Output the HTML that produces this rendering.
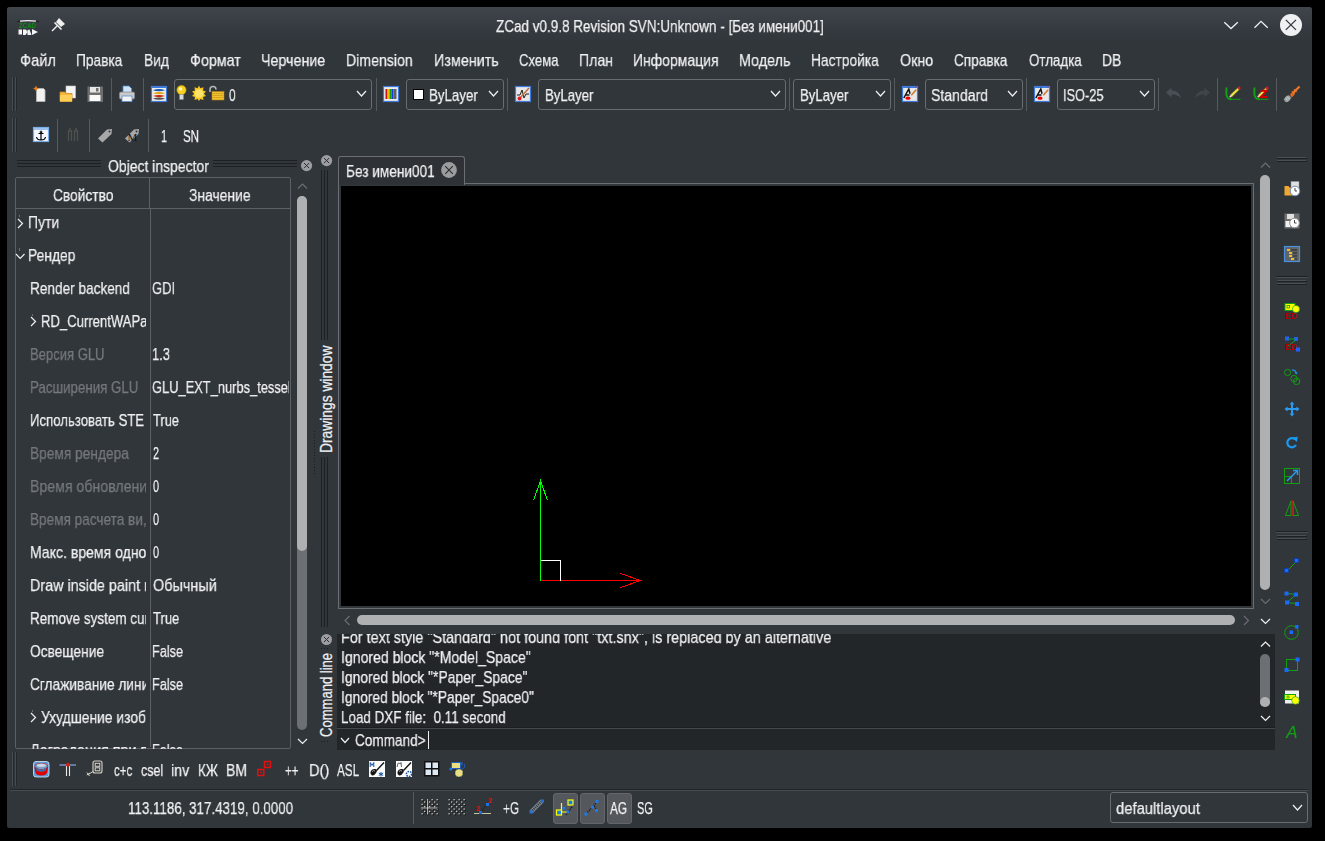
<!DOCTYPE html><html><head><meta charset="utf-8"><style>
html,body{margin:0;padding:0;width:1325px;height:841px;overflow:hidden;background:#000}
body>div,body>svg,div>div{position:absolute}
body{font-family:"Liberation Sans", sans-serif;position:relative}
span{-webkit-text-stroke:0.25px currentColor}
svg{position:absolute;overflow:visible}
</style></head><body>
<div style="left:7px;top:7px;width:1305px;height:821px;background:#31363b;border-radius:3px 3px 2px 2px"></div>
<div style="left:7px;top:7px;width:1305px;height:36px;background:linear-gradient(#40454c,#353a40 60%,#31363b);border-radius:3px 3px 0 0"></div>
<svg style="left:16px;top:18px;" width="24" height="19" viewBox="0 0 24 19"><path d="M1 4 Q3 2.5 5 3" stroke="#1a1a1a" stroke-width="1" fill="none"/><path d="M19 3 Q21 2.5 23 4" stroke="#1a1a1a" stroke-width="1" fill="none"/><path d="M4 3.2 Q12 2.2 20 3.2" stroke="#f0f0f0" stroke-width="1.3" fill="none"/>
<text x="3" y="10.3" textLength="17" lengthAdjust="spacingAndGlyphs" font-family="Liberation Sans" font-weight="bold" font-size="7" fill="#0e8a0e">ZCAD</text>
<path d="M2.5 11.5 h3.5 v5 h-3.5z M7 11.5 h3 l1.5 2.5 l-2 3 h-2.5z M11.5 12 l2 -0.5 l2 5.5 h-4z M16 11 l6 3 l-6 3z" fill="#f4f4f4"/></svg>
<svg style="left:50px;top:16px;" width="17" height="17" viewBox="0 0 17 17"><path d="M9 2 L15 8 L11 11 L6 6 Z" fill="#eff0f1"/><path d="M4.5 6.5 L11.5 13.5" stroke="#eff0f1" stroke-width="1.6"/><path d="M2 15 L7 10" stroke="#eff0f1" stroke-width="1.4"/></svg>
<div style="left:495.80px;top:18px;font-size:17px;line-height:17px;color:#eff0f1;white-space:pre;"><span id="t0" style="display:inline-block;transform:scaleX(0.7939);transform-origin:0 0;will-change:transform">ZCad v0.9.8 Revision SVN:Unknown - [Без имени001]</span></div>
<svg style="left:1222px;top:20px;" width="18" height="11" viewBox="0 0 18 11"><path d="M2.3 2.3 L9 8.5 L15.8 2.3" fill="none" stroke="#eff0f1" stroke-width="1.3"/></svg>
<svg style="left:1252px;top:19px;" width="18" height="11" viewBox="0 0 18 11"><path d="M2.5 8.8 L9 2.4 L15.7 8.8" fill="none" stroke="#eff0f1" stroke-width="1.3"/></svg>
<svg style="left:1279px;top:13px;" width="24" height="24" viewBox="0 0 24 24"><circle cx="12" cy="12" r="11" fill="#eff0f1"/><path d="M6.8 6.9 L17 16.9 M17 6.9 L6.8 16.9" stroke="#31363b" stroke-width="1.3"/></svg>
<div style="left:19.64px;top:52px;font-size:17px;line-height:17px;color:#eff0f1;white-space:pre;"><span id="t1" style="display:inline-block;transform:scaleX(0.8575);transform-origin:0 0;will-change:transform">Файл</span></div>
<div style="left:75.89px;top:52px;font-size:17px;line-height:17px;color:#eff0f1;white-space:pre;"><span id="t2" style="display:inline-block;transform:scaleX(0.8053);transform-origin:0 0;will-change:transform">Правка</span></div>
<div style="left:144.19px;top:52px;font-size:17px;line-height:17px;color:#eff0f1;white-space:pre;"><span id="t3" style="display:inline-block;transform:scaleX(0.8133);transform-origin:0 0;will-change:transform">Вид</span></div>
<div style="left:189.76px;top:52px;font-size:17px;line-height:17px;color:#eff0f1;white-space:pre;"><span id="t4" style="display:inline-block;transform:scaleX(0.8417);transform-origin:0 0;will-change:transform">Формат</span></div>
<div style="left:261.16px;top:52px;font-size:17px;line-height:17px;color:#eff0f1;white-space:pre;"><span id="t5" style="display:inline-block;transform:scaleX(0.8400);transform-origin:0 0;will-change:transform">Черчение</span></div>
<div style="left:346.17px;top:52px;font-size:17px;line-height:17px;color:#eff0f1;white-space:pre;"><span id="t6" style="display:inline-block;transform:scaleX(0.8316);transform-origin:0 0;will-change:transform">Dimension</span></div>
<div style="left:433.75px;top:52px;font-size:17px;line-height:17px;color:#eff0f1;white-space:pre;"><span id="t7" style="display:inline-block;transform:scaleX(0.8453);transform-origin:0 0;will-change:transform">Изменить</span></div>
<div style="left:518.53px;top:52px;font-size:17px;line-height:17px;color:#eff0f1;white-space:pre;"><span id="t8" style="display:inline-block;transform:scaleX(0.7725);transform-origin:0 0;will-change:transform">Схема</span></div>
<div style="left:578.77px;top:52px;font-size:17px;line-height:17px;color:#eff0f1;white-space:pre;"><span id="t9" style="display:inline-block;transform:scaleX(0.8308);transform-origin:0 0;will-change:transform">План</span></div>
<div style="left:632.58px;top:52px;font-size:17px;line-height:17px;color:#eff0f1;white-space:pre;"><span id="t10" style="display:inline-block;transform:scaleX(0.8214);transform-origin:0 0;will-change:transform">Информация</span></div>
<div style="left:738.86px;top:52px;font-size:17px;line-height:17px;color:#eff0f1;white-space:pre;"><span id="t11" style="display:inline-block;transform:scaleX(0.8433);transform-origin:0 0;will-change:transform">Модель</span></div>
<div style="left:810.69px;top:52px;font-size:17px;line-height:17px;color:#eff0f1;white-space:pre;"><span id="t12" style="display:inline-block;transform:scaleX(0.8096);transform-origin:0 0;will-change:transform">Настройка</span></div>
<div style="left:900.40px;top:52px;font-size:17px;line-height:17px;color:#eff0f1;white-space:pre;"><span id="t13" style="display:inline-block;transform:scaleX(0.8410);transform-origin:0 0;will-change:transform">Окно</span></div>
<div style="left:953.70px;top:52px;font-size:17px;line-height:17px;color:#eff0f1;white-space:pre;"><span id="t14" style="display:inline-block;transform:scaleX(0.8000);transform-origin:0 0;will-change:transform">Справка</span></div>
<div style="left:1028.70px;top:52px;font-size:17px;line-height:17px;color:#eff0f1;white-space:pre;"><span id="t15" style="display:inline-block;transform:scaleX(0.7838);transform-origin:0 0;will-change:transform">Отладка</span></div>
<div style="left:1102.18px;top:52px;font-size:17px;line-height:17px;color:#eff0f1;white-space:pre;"><span id="t16" style="display:inline-block;transform:scaleX(0.8182);transform-origin:0 0;will-change:transform">DB</span></div>
<div style="left:12px;top:77px;width:1px;height:34px;background:#474c53;"></div>
<div style="left:13px;top:77px;width:1px;height:34px;background:#25282c;"></div>
<div style="left:15px;top:77px;width:1px;height:34px;background:#474c53;"></div>
<div style="left:16px;top:77px;width:1px;height:34px;background:#25282c;"></div>
<svg style="left:33px;top:85px;" width="14" height="18" viewBox="0 0 14 18"><path d="M3.5 3.5 h7 l1.5 1.5 v11.5 h-8.5z" fill="#f2f2f2" stroke="#b9b9b9" stroke-width="0.8"/><path d="M3 0.5 L3.9 2.6 L6 3.5 L3.9 4.4 L3 6.5 L2.1 4.4 L0 3.5 L2.1 2.6Z" fill="#f07a10"/></svg>
<svg style="left:59px;top:85px;" width="18" height="18" viewBox="0 0 18 18"><rect x="7" y="1" width="9.5" height="12" fill="#f4f4f4" stroke="#c8c8c8" stroke-width="0.6"/><path d="M1 7 h5 l1 1.5 h6 v8 h-12z" fill="#f5b83c" stroke="#d18a1a" stroke-width="0.8"/><rect x="1" y="10" width="12" height="6.5" fill="#fbcf58"/></svg>
<svg style="left:87px;top:86px;" width="16" height="17" viewBox="0 0 16 17"><rect x="0.5" y="0.5" width="15.5" height="15.5" fill="#6e6e6e"/><rect x="3" y="1" width="10" height="5.5" fill="#e6e6e6"/><rect x="9" y="2" width="2.5" height="3.5" fill="#6e6e6e"/><rect x="2.5" y="9" width="11" height="6" fill="#fafafa"/></svg>
<div style="left:111px;top:78px;width:1px;height:33px;background:#555a5f;"></div>
<svg style="left:118px;top:85px;" width="18" height="18" viewBox="0 0 18 18"><path d="M5 1 h6 l2.5 2.5 v4.5 h-8.5z" fill="#cfe4fb" stroke="#4d8ad6" stroke-width="0.8"/><rect x="1.5" y="7" width="15" height="7" rx="1.5" fill="#c9c9c9" stroke="#8a8a8a" stroke-width="0.8"/><rect x="4" y="11" width="10" height="5.5" fill="#f3f3f3" stroke="#5a8fd0" stroke-width="0.8"/></svg>
<div style="left:143px;top:78px;width:1px;height:33px;background:#555a5f;"></div>
<svg style="left:151px;top:86px;" width="16" height="16" viewBox="0 0 16 16"><rect x="0.5" y="0.5" width="15" height="15" fill="#f4eee6" stroke="#3f7bdc" stroke-width="1.2"/><rect x="0" y="0" width="16" height="2" fill="#3f7bdc"/><path d="M1.8 4.2 Q8 2.0 14.2 4.2 Q8 6.4 1.8 4.2Z" fill="#1058b8"/><path d="M1.8 7.2 Q8 5.0 14.2 7.2 Q8 9.4 1.8 7.2Z" fill="#e0a818"/><path d="M1.8 10.1 Q8 7.8999999999999995 14.2 10.1 Q8 12.3 1.8 10.1Z" fill="#c02808"/><path d="M1.8 12.7 Q8 10.5 14.2 12.7 Q8 14.899999999999999 1.8 12.7Z" fill="#505050"/></svg>
<div style="left:174px;top:79px;width:196px;height:29px;border:1px solid #686c70;border-radius:3px;background:#31363b"></div>
<svg style="left:176px;top:85px;" width="12" height="16" viewBox="0 0 12 16"><circle cx="5.5" cy="5" r="4.6" fill="#f5d020" stroke="#c8a000" stroke-width="0.6"/><circle cx="4.5" cy="4" r="1.8" fill="#fff8c0"/><rect x="3.6" y="9.5" width="3.8" height="5" fill="#d8d8d8" stroke="#909090" stroke-width="0.5"/></svg>
<svg style="left:191px;top:85px;" width="16" height="16" viewBox="0 0 16 16"><path d="M8 0.5 L9.4 3.3 L12.5 2.3 L12 5.4 L15 6.6 L12.8 8.8 L15 11 L12 12 L12.5 15 L9.4 14 L8 16 L6.6 14 L3.5 15 L4 12 L1 11 L3.2 8.8 L1 6.6 L4 5.4 L3.5 2.3 L6.6 3.3Z" fill="#f7c51c"/><circle cx="8" cy="8.5" r="4.3" fill="#fde36a"/></svg>
<svg style="left:208px;top:85px;" width="17" height="16" viewBox="0 0 17 16"><path d="M2 7 V4.5 a3 3 0 0 1 6 0" fill="none" stroke="#b8b8b8" stroke-width="1.5"/><rect x="4" y="6.5" width="12" height="8.5" fill="#f2c230" stroke="#b08010" stroke-width="0.6"/><path d="M5 8.5 h10 M5 10.5 h10 M5 12.5 h10" stroke="#c89818" stroke-width="0.7"/></svg>
<div style="left:228.50px;top:87px;font-size:17px;line-height:17px;color:#eff0f1;white-space:pre;"><span id="t17" style="display:inline-block;transform:scaleX(0.7000);transform-origin:0 0;will-change:transform">0</span></div>
<svg style="left:356.0px;top:90.2px;" width="11" height="7" viewBox="0 0 11 7"><path d="M1 1 L5.5 6.0 L10.0 1" fill="none" stroke="#eff0f1" stroke-width="1.2" opacity="1"/></svg>
<div style="left:376px;top:78px;width:1px;height:33px;background:#555a5f;"></div>
<svg style="left:383px;top:86px;" width="16" height="16" viewBox="0 0 16 16"><rect x="0.5" y="0.5" width="15" height="15" fill="#ececec" stroke="#3f7bdc" stroke-width="1.2"/><rect x="2.5" y="3" width="2" height="10" fill="#d01010"/><rect x="4.5" y="3" width="2" height="10" fill="#f0c000"/><rect x="6.5" y="3" width="2" height="10" fill="#10a010"/><rect x="8.5" y="3" width="2" height="10" fill="#1040e0"/><rect x="10.5" y="3" width="3" height="10" fill="#606060"/></svg>
<div style="left:406px;top:79px;width:96px;height:29px;border:1px solid #686c70;border-radius:3px;background:#31363b"></div>
<div style="left:413px;top:89px;width:11px;height:11px;background:#ffffff;box-sizing:border-box;border:1px solid #000"></div>
<div style="left:428.72px;top:87px;font-size:17px;line-height:17px;color:#eff0f1;white-space:pre;"><span id="t18" style="display:inline-block;transform:scaleX(0.7823);transform-origin:0 0;will-change:transform">ByLayer</span></div>
<svg style="left:487.5px;top:90.2px;" width="11" height="7" viewBox="0 0 11 7"><path d="M1 1 L5.5 6.0 L10.0 1" fill="none" stroke="#eff0f1" stroke-width="1.2" opacity="1"/></svg>
<div style="left:507px;top:78px;width:1px;height:33px;background:#555a5f;"></div>
<svg style="left:515px;top:86px;" width="16" height="16" viewBox="0 0 16 16"><rect x="0.5" y="0.5" width="15" height="15" fill="#e8e8e8" stroke="#3f7bdc" stroke-width="1.2"/><path d="M2 9 L5 9 L7 4 L9 12 L11 8 L14 8" fill="none" stroke="#202020" stroke-width="1"/><path d="M14 2 L5 12" stroke="#c07040" stroke-width="1.5"/><circle cx="4.5" cy="12.5" r="2" fill="#e02020"/></svg>
<div style="left:538px;top:79px;width:246px;height:29px;border:1px solid #686c70;border-radius:3px;background:#31363b"></div>
<div style="left:544.92px;top:87px;font-size:17px;line-height:17px;color:#eff0f1;white-space:pre;"><span id="t19" style="display:inline-block;transform:scaleX(0.7758);transform-origin:0 0;will-change:transform">ByLayer</span></div>
<svg style="left:769.5px;top:90.2px;" width="11" height="7" viewBox="0 0 11 7"><path d="M1 1 L5.5 6.0 L10.0 1" fill="none" stroke="#eff0f1" stroke-width="1.2" opacity="1"/></svg>
<div style="left:789px;top:78px;width:1px;height:33px;background:#555a5f;"></div>
<div style="left:793px;top:79px;width:96px;height:29px;border:1px solid #686c70;border-radius:3px;background:#31363b"></div>
<div style="left:799.82px;top:87px;font-size:17px;line-height:17px;color:#eff0f1;white-space:pre;"><span id="t20" style="display:inline-block;transform:scaleX(0.7758);transform-origin:0 0;will-change:transform">ByLayer</span></div>
<svg style="left:874.8px;top:90.2px;" width="11" height="7" viewBox="0 0 11 7"><path d="M1 1 L5.5 6.0 L10.0 1" fill="none" stroke="#eff0f1" stroke-width="1.2" opacity="1"/></svg>
<div style="left:894px;top:78px;width:1px;height:33px;background:#555a5f;"></div>
<svg style="left:902px;top:86px;" width="16" height="16" viewBox="0 0 16 16"><rect x="0.5" y="0.5" width="15" height="15" fill="#e8e8e8" stroke="#3f7bdc" stroke-width="1.2"/><rect x="0" y="0" width="16" height="2" fill="#3f7bdc"/><rect x="13" y="0.3" width="2" height="1.5" fill="#8050b0"/><path d="M1.8 12 L6.8 3 L8 7.8 M4 9 L7.5 9" fill="none" stroke="#101010" stroke-width="1.5"/><path d="M14.2 3.8 L9.3 9.2" stroke="#d07a30" stroke-width="1.6"/><ellipse cx="6" cy="12.2" rx="2.6" ry="1.6" fill="#f00000"/></svg>
<div style="left:925px;top:79px;width:96px;height:29px;border:1px solid #686c70;border-radius:3px;background:#31363b"></div>
<div style="left:931.17px;top:87px;font-size:17px;line-height:17px;color:#eff0f1;white-space:pre;"><span id="t21" style="display:inline-block;transform:scaleX(0.8269);transform-origin:0 0;will-change:transform">Standard</span></div>
<svg style="left:1006.5px;top:90.2px;" width="11" height="7" viewBox="0 0 11 7"><path d="M1 1 L5.5 6.0 L10.0 1" fill="none" stroke="#eff0f1" stroke-width="1.2" opacity="1"/></svg>
<div style="left:1026px;top:78px;width:1px;height:33px;background:#555a5f;"></div>
<svg style="left:1034px;top:86px;" width="16" height="16" viewBox="0 0 16 16"><rect x="0.5" y="0.5" width="15" height="15" fill="#e8e8e8" stroke="#3f7bdc" stroke-width="1.2"/><rect x="0" y="0" width="16" height="2" fill="#3f7bdc"/><rect x="13" y="0.3" width="2" height="1.5" fill="#8050b0"/><path d="M1.8 12 L6.8 3 L8 7.8 M4 9 L7.5 9" fill="none" stroke="#101010" stroke-width="1.5"/><path d="M14.2 3.8 L9.3 9.2" stroke="#d07a30" stroke-width="1.6"/><ellipse cx="6" cy="12.2" rx="2.6" ry="1.6" fill="#f00000"/></svg>
<div style="left:1057px;top:79px;width:96px;height:29px;border:1px solid #686c70;border-radius:3px;background:#31363b"></div>
<div style="left:1063.25px;top:87px;font-size:17px;line-height:17px;color:#eff0f1;white-space:pre;"><span id="t22" style="display:inline-block;transform:scaleX(0.7509);transform-origin:0 0;will-change:transform">ISO-25</span></div>
<svg style="left:1138.5px;top:90.2px;" width="11" height="7" viewBox="0 0 11 7"><path d="M1 1 L5.5 6.0 L10.0 1" fill="none" stroke="#eff0f1" stroke-width="1.2" opacity="1"/></svg>
<div style="left:1158px;top:78px;width:1px;height:33px;background:#555a5f;"></div>
<svg style="left:1165px;top:86px;" width="18" height="16" viewBox="0 0 18 16"><path d="M1 6.5 L6.5 1.5 V4.5 Q15 4.5 16 13 Q13 8 6.5 8.5 V11.5Z" fill="#4a4f55"/></svg>
<svg style="left:1193px;top:86px;" width="18" height="16" viewBox="0 0 18 16"><path d="M17 6.5 L11.5 1.5 V4.5 Q3 4.5 2 13 Q5 8 11.5 8.5 V11.5Z" fill="#40454b"/></svg>
<div style="left:1217px;top:78px;width:1px;height:33px;background:#555a5f;"></div>
<svg style="left:1224px;top:85px;" width="18" height="17" viewBox="0 0 18 17"><path d="M2.4 2.5 V8.5 Q2.4 14 7.5 14.3" fill="none" stroke="#10a010" stroke-width="2"/><path d="M7 14.3 H16.5" stroke="#10a010" stroke-width="1"/><path d="M7.2 10.8 L14.6 3.6" stroke="#c8c020" stroke-width="2.6"/><path d="M7.2 10.8 L14.6 3.6" stroke="#f0e860" stroke-width="1.2"/><path d="M14.2 4 L16 2.2" stroke="#d02020" stroke-width="2.6"/><path d="M5.8 12.2 L7.4 10.6" stroke="#f0d0c0" stroke-width="1.8"/></svg>
<svg style="left:1252px;top:85px;" width="18" height="17" viewBox="0 0 18 17"><path d="M2.4 2.5 V8.5 Q2.4 14 7.5 14.3" fill="none" stroke="#10a010" stroke-width="2"/><path d="M7 14.3 H16.5" stroke="#10a010" stroke-width="1"/><path d="M7.2 10.8 L14.6 3.6" stroke="#c8c020" stroke-width="2.6"/><path d="M7.2 10.8 L14.6 3.6" stroke="#f0e860" stroke-width="1.2"/><path d="M14.2 4 L16 2.2" stroke="#d02020" stroke-width="2.6"/><path d="M5.8 12.2 L7.4 10.6" stroke="#f0d0c0" stroke-width="1.8"/><path d="M8.5 5.8 H14.5 L9 12 H15" fill="none" stroke="#d00000" stroke-width="2"/></svg>
<div style="left:1276px;top:78px;width:1px;height:33px;background:#555a5f;"></div>
<svg style="left:1282px;top:84px;" width="20" height="20" viewBox="0 0 20 20"><path d="M17.5 2.5 L9.5 10.5" stroke="#f07828" stroke-width="2.2"/><path d="M12 5.5 L14.5 8 M10 7.5 L12.5 10" stroke="#f07828" stroke-width="1.5"/><path d="M11.5 9.5 L7.5 13.5" stroke="#e06818" stroke-width="3.2"/><ellipse cx="5.5" cy="14.8" rx="4.3" ry="3.2" transform="rotate(-45 5.5 14.8)" fill="#9aa4a6" stroke="#202020" stroke-width="0.7"/><path d="M3.5 14 L6 16.5 M5 12.5 L7.5 15" stroke="#d8dcdc" stroke-width="0.8"/></svg>
<div style="left:12px;top:118px;width:1px;height:34px;background:#474c53;"></div>
<div style="left:13px;top:118px;width:1px;height:34px;background:#25282c;"></div>
<div style="left:15px;top:118px;width:1px;height:34px;background:#474c53;"></div>
<div style="left:16px;top:118px;width:1px;height:34px;background:#25282c;"></div>
<svg style="left:33px;top:127px;" width="16" height="15" viewBox="0 0 16 15"><rect x="0.5" y="0.5" width="15" height="14" fill="#f4f8ff" stroke="#7aaee8" stroke-width="1.2"/><rect x="1" y="1" width="14" height="2" fill="#9cc4f0"/><path d="M8 4.5 V12.5 M5.5 6.5 h5 M3.5 10 Q4 13 8 13 Q12 13 12.5 10" fill="none" stroke="#000" stroke-width="1.2"/><circle cx="8" cy="5" r="1" fill="none" stroke="#000" stroke-width="0.8"/></svg>
<div style="left:57px;top:119px;width:1px;height:33px;background:#555a5f;"></div>
<svg style="left:67px;top:127px;" width="12" height="15" viewBox="0 0 12 15"><path d="M1.5 14 V4 h3 V14 M7.5 14 V4 h3 V14" fill="none" stroke="#4e524d" stroke-width="1.3"/><path d="M3 1 v3 M9 1 v3" stroke="#4e524d" stroke-width="1.5"/></svg>
<div style="left:89px;top:119px;width:1px;height:33px;background:#555a5f;"></div>
<svg style="left:97px;top:127px;" width="16" height="15" viewBox="0 0 16 15"><path d="M1 11.5 L10 2.5 L15 2 L14.5 7 L5.5 15.5Z" fill="#a8a8a8"/><circle cx="12.5" cy="4.5" r="1" fill="#31363b"/></svg>
<svg style="left:124px;top:127px;" width="17" height="15" viewBox="0 0 17 15"><path d="M1 11.5 L10 2.5 L15 2 L14.5 7 L5.5 15.5Z" fill="#a8a8a8"/><circle cx="12.5" cy="4.5" r="1" fill="#31363b"/><text x="8.5" y="14" font-family="Liberation Serif" font-size="11" fill="#111" text-anchor="middle">M</text></svg>
<div style="left:148px;top:119px;width:1px;height:33px;background:#555a5f;"></div>
<div style="left:161.38px;top:128px;font-size:17px;line-height:17px;color:#eff0f1;white-space:pre;"><span id="t23" style="display:inline-block;transform:scaleX(0.6250);transform-origin:0 0;will-change:transform">1</span></div>
<div style="left:182.92px;top:128px;font-size:17px;line-height:17px;color:#eff0f1;white-space:pre;"><span id="t24" style="display:inline-block;transform:scaleX(0.6773);transform-origin:0 0;will-change:transform">SN</span></div>
<div style="left:17px;top:160px;width:84px;height:1px;background:#1e2124;"></div>
<div style="left:17px;top:161px;width:84px;height:1px;background:#31363b;"></div>
<div style="left:17px;top:163px;width:84px;height:1px;background:#1e2124;"></div>
<div style="left:17px;top:164px;width:84px;height:1px;background:#31363b;"></div>
<div style="left:17px;top:166px;width:84px;height:1px;background:#1e2124;"></div>
<div style="left:17px;top:167px;width:84px;height:1px;background:#31363b;"></div>
<div style="left:213px;top:160px;width:84px;height:1px;background:#1e2124;"></div>
<div style="left:213px;top:161px;width:84px;height:1px;background:#31363b;"></div>
<div style="left:213px;top:163px;width:84px;height:1px;background:#1e2124;"></div>
<div style="left:213px;top:164px;width:84px;height:1px;background:#31363b;"></div>
<div style="left:213px;top:166px;width:84px;height:1px;background:#1e2124;"></div>
<div style="left:213px;top:167px;width:84px;height:1px;background:#31363b;"></div>
<div style="left:107.70px;top:158px;font-size:17px;line-height:17px;color:#eff0f1;white-space:pre;"><span id="t25" style="display:inline-block;transform:scaleX(0.8211);transform-origin:0 0;will-change:transform">Object inspector</span></div>
<svg style="left:299.7px;top:158.8px;" width="13.2" height="13.2" viewBox="0 0 13.2 13.2"><circle cx="6.6" cy="6.6" r="5.6" fill="#9c9ea1"/><path d="M3.9999999999999996 3.9999999999999996 L9.2 9.2 M9.2 3.9999999999999996 L3.9999999999999996 9.2" stroke="#2a2e32" stroke-width="1"/></svg>
<div style="left:15px;top:177px;width:274px;height:570px;border:1px solid #5d6166;border-radius:2px"></div>
<div style="left:16px;top:208px;width:274px;height:1px;background:#5d6166;"></div>
<div style="left:149px;top:178px;width:1px;height:30px;background:#5d6166;"></div>
<div style="left:150px;top:209px;width:1px;height:538px;background:#5d6166;"></div>
<div style="left:53.09px;top:187px;font-size:17px;line-height:17px;color:#eff0f1;white-space:pre;"><span id="t26" style="display:inline-block;transform:scaleX(0.8096);transform-origin:0 0;will-change:transform">Свойство</span></div>
<div style="left:189.00px;top:187px;font-size:17px;line-height:17px;color:#eff0f1;white-space:pre;"><span id="t27" style="display:inline-block;transform:scaleX(0.8160);transform-origin:0 0;will-change:transform">Значение</span></div>
<svg style="left:16.8px;top:217.5px;" width="6.5" height="11" viewBox="0 0 6.5 11"><path d="M1 1 L5.5 5.5 L1 10.0" fill="none" stroke="#eff0f1" stroke-width="1.2" opacity="1"/></svg>
<div style="left:19px;top:215px;width:1px;height:2px;background:#6a6e72;"></div>
<div style="left:25.5px;top:212px;width:120.5px;height:23px;overflow:hidden"><div style="left:2.18px;top:2px;font-size:17px;line-height:17px;color:#eff0f1;white-space:pre;"><span id="t28" style="display:inline-block;transform:scaleX(0.8222);transform-origin:0 0;will-change:transform">Пути</span></div></div>
<svg style="left:14.9px;top:252.6px;" width="10.5" height="6.5" viewBox="0 0 10.5 6.5"><path d="M1 1 L5.2 5.5 L9.5 1" fill="none" stroke="#eff0f1" stroke-width="1.2" opacity="1"/></svg>
<div style="left:19px;top:248px;width:1px;height:3px;background:#6a6e72;"></div>
<div style="left:25.6px;top:245px;width:120.4px;height:23px;overflow:hidden"><div style="left:2.19px;top:2px;font-size:17px;line-height:17px;color:#eff0f1;white-space:pre;"><span id="t29" style="display:inline-block;transform:scaleX(0.8140);transform-origin:0 0;will-change:transform">Рендер</span></div></div>
<div style="left:27.8px;top:278px;width:118.2px;height:23px;overflow:hidden"><div style="left:2.20px;top:2px;font-size:17px;line-height:17px;color:#eff0f1;white-space:pre;"><span id="t30" style="display:inline-block;transform:scaleX(0.8008);transform-origin:0 0;will-change:transform">Render backend</span></div></div>
<div style="left:149.7px;top:278px;width:139.3px;height:23px;overflow:hidden"><div style="left:2.24px;top:2px;font-size:17px;line-height:17px;color:#eff0f1;white-space:pre;"><span id="t31" style="display:inline-block;transform:scaleX(0.7643);transform-origin:0 0;will-change:transform">GDI</span></div></div>
<svg style="left:29.5px;top:316.3px;" width="6.5" height="11" viewBox="0 0 6.5 11"><path d="M1 1 L5.5 5.5 L1 10.0" fill="none" stroke="#eff0f1" stroke-width="1.2" opacity="1"/></svg>
<div style="left:32px;top:314px;width:1px;height:2px;background:#6a6e72;"></div>
<div style="left:38.7px;top:311px;width:107.3px;height:23px;overflow:hidden"><div style="left:2.23px;top:2px;font-size:17px;line-height:17px;color:#eff0f1;white-space:pre;"><span id="t32" style="display:inline-block;transform:scaleX(0.7703);transform-origin:0 0;will-change:transform">RD_CurrentWAPa</span></div></div>
<div style="left:27.8px;top:344px;width:118.2px;height:23px;overflow:hidden"><div style="left:2.23px;top:2px;font-size:17px;line-height:17px;color:#75787c;white-space:pre;"><span id="t33" style="display:inline-block;transform:scaleX(0.7674);transform-origin:0 0;will-change:transform">Версия GLU</span></div></div>
<div style="left:149.7px;top:344px;width:139.3px;height:23px;overflow:hidden"><div style="left:2.25px;top:2px;font-size:17px;line-height:17px;color:#eff0f1;white-space:pre;"><span id="t34" style="display:inline-block;transform:scaleX(0.7545);transform-origin:0 0;will-change:transform">1.3</span></div></div>
<div style="left:27.8px;top:377px;width:118.2px;height:23px;overflow:hidden"><div style="left:2.22px;top:2px;font-size:17px;line-height:17px;color:#75787c;white-space:pre;"><span id="t35" style="display:inline-block;transform:scaleX(0.7825);transform-origin:0 0;will-change:transform">Расширения GLU</span></div></div>
<div style="left:149.7px;top:377px;width:139.3px;height:23px;overflow:hidden"><div style="left:2.24px;top:2px;font-size:17px;line-height:17px;color:#eff0f1;white-space:pre;"><span id="t36" style="display:inline-block;transform:scaleX(0.7571);transform-origin:0 0;will-change:transform">GLU_EXT_nurbs_tessel</span></div></div>
<div style="left:27.8px;top:410px;width:118.2px;height:23px;overflow:hidden"><div style="left:2.22px;top:2px;font-size:17px;line-height:17px;color:#eff0f1;white-space:pre;"><span id="t37" style="display:inline-block;transform:scaleX(0.7753);transform-origin:0 0;will-change:transform">Использовать STE</span></div></div>
<div style="left:149.7px;top:410px;width:139.3px;height:23px;overflow:hidden"><div style="left:3.00px;top:2px;font-size:17px;line-height:17px;color:#eff0f1;white-space:pre;"><span id="t38" style="display:inline-block;transform:scaleX(0.7588);transform-origin:0 0;will-change:transform">True</span></div></div>
<div style="left:27.8px;top:443px;width:118.2px;height:23px;overflow:hidden"><div style="left:2.19px;top:2px;font-size:17px;line-height:17px;color:#75787c;white-space:pre;"><span id="t39" style="display:inline-block;transform:scaleX(0.8074);transform-origin:0 0;will-change:transform">Время рендера</span></div></div>
<div style="left:149.7px;top:443px;width:139.3px;height:23px;overflow:hidden"><div style="left:3.00px;top:2px;font-size:17px;line-height:17px;color:#eff0f1;white-space:pre;"><span id="t40" style="display:inline-block;transform:scaleX(0.6333);transform-origin:0 0;will-change:transform">2</span></div></div>
<div style="left:27.8px;top:476px;width:118.2px;height:23px;overflow:hidden"><div style="left:2.17px;top:2px;font-size:17px;line-height:17px;color:#75787c;white-space:pre;"><span id="t41" style="display:inline-block;transform:scaleX(0.8324);transform-origin:0 0;will-change:transform">Время обновлени</span></div></div>
<div style="left:149.7px;top:476px;width:139.3px;height:23px;overflow:hidden"><div style="left:3.00px;top:2px;font-size:17px;line-height:17px;color:#eff0f1;white-space:pre;"><span id="t42" style="display:inline-block;transform:scaleX(0.6333);transform-origin:0 0;will-change:transform">0</span></div></div>
<div style="left:27.8px;top:509px;width:118.2px;height:23px;overflow:hidden"><div style="left:2.20px;top:2px;font-size:17px;line-height:17px;color:#75787c;white-space:pre;"><span id="t43" style="display:inline-block;transform:scaleX(0.8000);transform-origin:0 0;will-change:transform">Время расчета ви,</span></div></div>
<div style="left:149.7px;top:509px;width:139.3px;height:23px;overflow:hidden"><div style="left:3.00px;top:2px;font-size:17px;line-height:17px;color:#eff0f1;white-space:pre;"><span id="t44" style="display:inline-block;transform:scaleX(0.6333);transform-origin:0 0;will-change:transform">0</span></div></div>
<div style="left:27.8px;top:542px;width:118.2px;height:23px;overflow:hidden"><div style="left:2.17px;top:2px;font-size:17px;line-height:17px;color:#eff0f1;white-space:pre;"><span id="t45" style="display:inline-block;transform:scaleX(0.8266);transform-origin:0 0;will-change:transform">Макс. время одно</span></div></div>
<div style="left:149.7px;top:542px;width:139.3px;height:23px;overflow:hidden"><div style="left:3.00px;top:2px;font-size:17px;line-height:17px;color:#eff0f1;white-space:pre;"><span id="t46" style="display:inline-block;transform:scaleX(0.6333);transform-origin:0 0;will-change:transform">0</span></div></div>
<div style="left:27.4px;top:575px;width:118.6px;height:23px;overflow:hidden"><div style="left:2.16px;top:2px;font-size:17px;line-height:17px;color:#eff0f1;white-space:pre;"><span id="t47" style="display:inline-block;transform:scaleX(0.8436);transform-origin:0 0;will-change:transform">Draw inside paint r</span></div></div>
<div style="left:149.7px;top:575px;width:139.3px;height:23px;overflow:hidden"><div style="left:3.00px;top:2px;font-size:17px;line-height:17px;color:#eff0f1;white-space:pre;"><span id="t48" style="display:inline-block;transform:scaleX(0.8480);transform-origin:0 0;will-change:transform">Обычный</span></div></div>
<div style="left:27.4px;top:608px;width:118.6px;height:23px;overflow:hidden"><div style="left:2.21px;top:2px;font-size:17px;line-height:17px;color:#eff0f1;white-space:pre;"><span id="t49" style="display:inline-block;transform:scaleX(0.7926);transform-origin:0 0;will-change:transform">Remove system cur</span></div></div>
<div style="left:149.7px;top:608px;width:139.3px;height:23px;overflow:hidden"><div style="left:3.00px;top:2px;font-size:17px;line-height:17px;color:#eff0f1;white-space:pre;"><span id="t50" style="display:inline-block;transform:scaleX(0.7676);transform-origin:0 0;will-change:transform">True</span></div></div>
<div style="left:27.4px;top:641px;width:118.6px;height:23px;overflow:hidden"><div style="left:3.00px;top:2px;font-size:17px;line-height:17px;color:#eff0f1;white-space:pre;"><span id="t51" style="display:inline-block;transform:scaleX(0.8077);transform-origin:0 0;will-change:transform">Освещение</span></div></div>
<div style="left:149.7px;top:641px;width:139.3px;height:23px;overflow:hidden"><div style="left:2.25px;top:2px;font-size:17px;line-height:17px;color:#eff0f1;white-space:pre;"><span id="t52" style="display:inline-block;transform:scaleX(0.7500);transform-origin:0 0;will-change:transform">False</span></div></div>
<div style="left:27.4px;top:674px;width:118.6px;height:23px;overflow:hidden"><div style="left:2.19px;top:2px;font-size:17px;line-height:17px;color:#eff0f1;white-space:pre;"><span id="t53" style="display:inline-block;transform:scaleX(0.8055);transform-origin:0 0;will-change:transform">Сглаживание лини</span></div></div>
<div style="left:149.7px;top:674px;width:139.3px;height:23px;overflow:hidden"><div style="left:2.25px;top:2px;font-size:17px;line-height:17px;color:#eff0f1;white-space:pre;"><span id="t54" style="display:inline-block;transform:scaleX(0.7500);transform-origin:0 0;will-change:transform">False</span></div></div>
<svg style="left:29.5px;top:712.3px;" width="6.5" height="11" viewBox="0 0 6.5 11"><path d="M1 1 L5.5 5.5 L1 10.0" fill="none" stroke="#eff0f1" stroke-width="1.2" opacity="1"/></svg>
<div style="left:32px;top:710px;width:1px;height:2px;background:#6a6e72;"></div>
<div style="left:38.3px;top:707px;width:107.7px;height:23px;overflow:hidden"><div style="left:3.00px;top:2px;font-size:17px;line-height:17px;color:#eff0f1;white-space:pre;"><span id="t55" style="display:inline-block;transform:scaleX(0.8148);transform-origin:0 0;will-change:transform">Ухудшение изоб</span></div></div>
<div style="left:27.4px;top:740px;width:118.6px;height:23px;overflow:hidden"><div style="left:3.00px;top:2px;font-size:17px;line-height:17px;color:#eff0f1;white-space:pre;"><span id="t56" style="display:inline-block;transform:scaleX(0.8400);transform-origin:0 0;will-change:transform">Деградация при п</span></div></div>
<div style="left:149.7px;top:740px;width:139.3px;height:23px;overflow:hidden"><div style="left:2.25px;top:2px;font-size:17px;line-height:17px;color:#eff0f1;white-space:pre;"><span id="t57" style="display:inline-block;transform:scaleX(0.7500);transform-origin:0 0;will-change:transform">False</span></div></div>
<div style="left:15px;top:749px;width:276px;height:11px;background:#31363b;"></div>
<svg style="left:296.5px;top:183.2px;" width="11" height="6.5" viewBox="0 0 11 6.5"><path d="M1.0 5.5 L5.5 1 L10.0 5.5" fill="none" stroke="#6a6e72" stroke-width="1.2" opacity="1"/></svg>
<div style="left:297px;top:196px;width:10px;height:534px;background:#6c6f73;border-radius:5px"></div>
<div style="left:297px;top:196px;width:10px;height:355px;background:#afb0b2;border-radius:5px"></div>
<svg style="left:296.5px;top:737.5px;" width="11" height="6.5" viewBox="0 0 11 6.5"><path d="M1 1 L5.5 5.5 L10.0 1" fill="none" stroke="#eff0f1" stroke-width="1.2" opacity="1"/></svg>
<svg style="left:319.79999999999995px;top:154.0px;" width="13.2" height="13.2" viewBox="0 0 13.2 13.2"><circle cx="6.6" cy="6.6" r="5.6" fill="#9c9ea1"/><path d="M3.9999999999999996 3.9999999999999996 L9.2 9.2 M9.2 3.9999999999999996 L3.9999999999999996 9.2" stroke="#2a2e32" stroke-width="1"/></svg>
<div style="left:321px;top:170px;width:1px;height:170px;background:#1e2124;"></div>
<div style="left:322px;top:170px;width:1px;height:170px;background:#31363b;"></div>
<div style="left:324px;top:170px;width:1px;height:170px;background:#1e2124;"></div>
<div style="left:325px;top:170px;width:1px;height:170px;background:#31363b;"></div>
<div style="left:327px;top:170px;width:1px;height:170px;background:#1e2124;"></div>
<div style="left:328px;top:170px;width:1px;height:170px;background:#31363b;"></div>
<div style="left:321px;top:457px;width:1px;height:170px;background:#1e2124;"></div>
<div style="left:322px;top:457px;width:1px;height:170px;background:#31363b;"></div>
<div style="left:324px;top:457px;width:1px;height:170px;background:#1e2124;"></div>
<div style="left:325px;top:457px;width:1px;height:170px;background:#31363b;"></div>
<div style="left:327px;top:457px;width:1px;height:170px;background:#1e2124;"></div>
<div style="left:328px;top:457px;width:1px;height:170px;background:#31363b;"></div>
<div style="left:319px;top:453.06px;font-size:16px;line-height:16px;color:#eff0f1;white-space:pre;transform:rotate(-90deg) scaleX(0.8629);transform-origin:0 0"><span id="t58">Drawings window</span></div>
<div style="left:314px;top:431px;width:1px;height:1px;background:#1a1d20;"></div>
<div style="left:314px;top:434px;width:1px;height:1px;background:#1a1d20;"></div>
<div style="left:314px;top:437px;width:1px;height:1px;background:#1a1d20;"></div>
<div style="left:314px;top:440px;width:1px;height:1px;background:#1a1d20;"></div>
<div style="left:314px;top:443px;width:1px;height:1px;background:#1a1d20;"></div>
<div style="left:314px;top:446px;width:1px;height:1px;background:#1a1d20;"></div>
<div style="left:314px;top:449px;width:1px;height:1px;background:#1a1d20;"></div>
<div style="left:314px;top:452px;width:1px;height:1px;background:#1a1d20;"></div>
<div style="left:314px;top:455px;width:1px;height:1px;background:#1a1d20;"></div>
<div style="left:314px;top:458px;width:1px;height:1px;background:#1a1d20;"></div>
<div style="left:314px;top:461px;width:1px;height:1px;background:#1a1d20;"></div>
<div style="left:314px;top:464px;width:1px;height:1px;background:#1a1d20;"></div>
<div style="left:314px;top:467px;width:1px;height:1px;background:#1a1d20;"></div>
<div style="left:314px;top:470px;width:1px;height:1px;background:#1a1d20;"></div>
<div style="left:314px;top:473px;width:1px;height:1px;background:#1a1d20;"></div>
<div style="left:338px;top:156px;width:125px;height:28px;border:1px solid #6b6f73;border-bottom:none;border-radius:3px 3px 0 0;background:#2e3236"></div>
<div style="left:346.40px;top:163px;font-size:17px;line-height:17px;color:#eff0f1;white-space:pre;"><span id="t59" style="display:inline-block;transform:scaleX(0.8018);transform-origin:0 0;will-change:transform">Без имени001</span></div>
<svg style="left:440px;top:161px;" width="18" height="18" viewBox="0 0 18 18"><circle cx="9" cy="9" r="7.9" fill="#9a9c9e"/><path d="M5.2 5.2 L12.8 12.8 M12.8 5.2 L5.2 12.8" stroke="#2a2e32" stroke-width="1.1"/></svg>
<div style="left:464px;top:183px;width:790px;height:1px;background:#6b6f73;"></div>
<div style="left:338px;top:184px;width:1px;height:425px;background:#6b6f73;"></div>
<div style="left:1253px;top:183px;width:1px;height:426px;background:#6b6f73;"></div>
<div style="left:338px;top:608px;width:916px;height:1px;background:#6b6f73;"></div>
<div style="left:341px;top:186px;width:910px;height:420px;background:#000000;"></div>
<svg style="left:530px;top:478px;shape-rendering:crispEdges" width="115" height="112" viewBox="0 0 115 112"><path d="M10.5 2.5 V102.5" stroke="#00ff00" stroke-width="1"/>
<path d="M3.5 22.5 L10.5 2.5 L17.5 22.5" fill="none" stroke="#00ff00" stroke-width="1"/>
<path d="M10.5 102.5 H110.5" stroke="#ff0000" stroke-width="1"/>
<path d="M90.5 95.5 L110.5 102.5 L90.5 109.5" fill="none" stroke="#ff0000" stroke-width="1"/>
<path d="M10.5 82.5 H30.5 V102.5" fill="none" stroke="#ffffff" stroke-width="1"/></svg>
<svg style="left:1259.5px;top:161.8px;" width="11" height="6.5" viewBox="0 0 11 6.5"><path d="M1.0 5.5 L5.5 1 L10.0 5.5" fill="none" stroke="#6a6e72" stroke-width="1.2" opacity="1"/></svg>
<div style="left:1260px;top:175px;width:10px;height:415px;background:#afb0b2;border-radius:5px"></div>
<svg style="left:1259.5px;top:597.5px;" width="11" height="6.5" viewBox="0 0 11 6.5"><path d="M1 1 L5.5 5.5 L10.0 1" fill="none" stroke="#6a6e72" stroke-width="1.2" opacity="1"/></svg>
<svg style="left:343.8px;top:614.5px;" width="6.5" height="11" viewBox="0 0 6.5 11"><path d="M5.5 1 L1 5.5 L5.5 10.0" fill="none" stroke="#6a6e72" stroke-width="1.2" opacity="1"/></svg>
<div style="left:357px;top:615px;width:878px;height:10px;background:#afb0b2;border-radius:5px"></div>
<svg style="left:1242.8px;top:614.5px;" width="6.5" height="11" viewBox="0 0 6.5 11"><path d="M1 1 L5.5 5.5 L1 10.0" fill="none" stroke="#6a6e72" stroke-width="1.2" opacity="1"/></svg>
<svg style="left:1259.5px;top:617.5px;" width="11" height="6.5" viewBox="0 0 11 6.5"><path d="M1 1 L5.5 5.5 L10.0 1" fill="none" stroke="#eff0f1" stroke-width="1.2" opacity="1"/></svg>
<div style="left:321px;top:457px;width:1px;height:170px;background:#1e2124;"></div>
<div style="left:322px;top:457px;width:1px;height:170px;background:#31363b;"></div>
<div style="left:324px;top:457px;width:1px;height:170px;background:#1e2124;"></div>
<div style="left:325px;top:457px;width:1px;height:170px;background:#31363b;"></div>
<div style="left:327px;top:457px;width:1px;height:170px;background:#1e2124;"></div>
<div style="left:328px;top:457px;width:1px;height:170px;background:#31363b;"></div>
<svg style="left:320.0px;top:633.0px;" width="13.0" height="13.0" viewBox="0 0 13.0 13.0"><circle cx="6.5" cy="6.5" r="5.5" fill="#9c9ea1"/><path d="M3.9 3.9 L9.1 9.1 M9.1 3.9 L3.9 9.1" stroke="#2a2e32" stroke-width="1"/></svg>
<div style="left:319px;top:737.00px;font-size:16px;line-height:16px;color:#eff0f1;white-space:pre;transform:rotate(-90deg) scaleX(0.8155);transform-origin:0 0"><span id="t60">Command line</span></div>
<div style="left:321px;top:648px;width:1px;height:1px;background:#1a1d20;"></div>
<div style="left:321px;top:741px;width:1px;height:1px;background:#1a1d20;"></div>
<div style="left:324px;top:648px;width:1px;height:1px;background:#1a1d20;"></div>
<div style="left:324px;top:741px;width:1px;height:1px;background:#1a1d20;"></div>
<div style="left:327px;top:648px;width:1px;height:1px;background:#1a1d20;"></div>
<div style="left:327px;top:741px;width:1px;height:1px;background:#1a1d20;"></div>
<div style="left:337px;top:634px;width:938px;height:116px;background:#232629;"></div>
<div style="left:340.65px;top:629px;font-size:17px;line-height:17px;color:#eff0f1;white-space:pre;"><span id="t61" style="display:inline-block;transform:scaleX(0.8469);transform-origin:0 0;will-change:transform">For text style &quot;Standard&quot; not found font &quot;txt.shx&quot;, is replaced by an alternative</span></div>
<div style="left:340.67px;top:649px;font-size:17px;line-height:17px;color:#eff0f1;white-space:pre;"><span id="t62" style="display:inline-block;transform:scaleX(0.8268);transform-origin:0 0;will-change:transform">Ignored block &quot;*Model_Space&quot;</span></div>
<div style="left:340.68px;top:669px;font-size:17px;line-height:17px;color:#eff0f1;white-space:pre;"><span id="t63" style="display:inline-block;transform:scaleX(0.8159);transform-origin:0 0;will-change:transform">Ignored block &quot;*Paper_Space&quot;</span></div>
<div style="left:340.69px;top:689px;font-size:17px;line-height:17px;color:#eff0f1;white-space:pre;"><span id="t64" style="display:inline-block;transform:scaleX(0.8105);transform-origin:0 0;will-change:transform">Ignored block &quot;*Paper_Space0&quot;</span></div>
<div style="left:340.71px;top:709px;font-size:17px;line-height:17px;color:#eff0f1;white-space:pre;"><span id="t65" style="display:inline-block;transform:scaleX(0.7899);transform-origin:0 0;will-change:transform">Load DXF file:  0.11 second</span></div>
<div style="left:337px;top:626px;width:938px;height:8px;background:#31363b;"></div>
<div style="left:337px;top:727px;width:938px;height:1px;background:#1c1f22;"></div>
<div style="left:337px;top:728px;width:938px;height:1px;background:#43484f;"></div>
<div style="left:337px;top:729px;width:938px;height:21px;background:#232629;"></div>
<svg style="left:339.8px;top:737.2px;" width="10" height="6.5" viewBox="0 0 10 6.5"><path d="M1 1 L5.0 5.5 L9.0 1" fill="none" stroke="#eff0f1" stroke-width="1.2" opacity="1"/></svg>
<div style="left:355.10px;top:732px;font-size:17px;line-height:17px;color:#eff0f1;white-space:pre;"><span id="t66" style="display:inline-block;transform:scaleX(0.7989);transform-origin:0 0;will-change:transform">Command&gt;</span></div>
<div style="left:428px;top:731px;width:1px;height:18px;background:#eff0f1;"></div>
<div style="left:1255px;top:634px;width:20px;height:93px;background:#232629;"></div>
<svg style="left:1259.5px;top:641.0px;" width="11" height="6.5" viewBox="0 0 11 6.5"><path d="M1.0 5.5 L5.5 1 L10.0 5.5" fill="none" stroke="#eff0f1" stroke-width="1.2" opacity="1"/></svg>
<div style="left:1260px;top:654px;width:10px;height:53px;background:#6c6f73;border-radius:5px"></div>
<div style="left:1260px;top:697px;width:10px;height:10px;background:#afb0b2;border-radius:5px"></div>
<svg style="left:1259.5px;top:714.5px;" width="11" height="6.5" viewBox="0 0 11 6.5"><path d="M1 1 L5.5 5.5 L10.0 1" fill="none" stroke="#eff0f1" stroke-width="1.2" opacity="1"/></svg>
<div style="left:1277px;top:157px;width:29px;height:1px;background:#4a4f56;"></div>
<div style="left:1277px;top:158px;width:30px;height:1px;background:#1e2124;"></div>
<div style="left:1277px;top:160px;width:29px;height:1px;background:#4a4f56;"></div>
<div style="left:1277px;top:161px;width:30px;height:1px;background:#1e2124;"></div>
<svg style="left:1284px;top:181px;" width="16" height="16" viewBox="0 0 16 16"><path d="M0.5 5 h4 l1 1.5 h5 v8 h-10z" fill="#f0a830"/><rect x="7" y="0.5" width="8" height="7" fill="#e0e0e0" stroke="#909090" stroke-width="0.5"/><circle cx="11" cy="10" r="4.8" fill="#fff" stroke="#6a8ab8" stroke-width="1"/><path d="M11 7 V10 H13" stroke="#333" stroke-width="0.9" fill="none"/></svg>
<svg style="left:1284px;top:213px;" width="16" height="16" viewBox="0 0 16 16"><rect x="0.5" y="0.5" width="15" height="15" fill="#707070"/><rect x="3" y="1" width="7" height="5" fill="#e0e0e0"/><rect x="1.5" y="8" width="5" height="6" fill="#f0f0f0"/><circle cx="10.5" cy="10" r="4.8" fill="#fff" stroke="#909090" stroke-width="1"/><path d="M10.5 7 V10 H12.5" stroke="#333" stroke-width="0.9" fill="none"/></svg>
<svg style="left:1284px;top:246px;" width="16" height="16" viewBox="0 0 16 16"><rect x="0.5" y="0.5" width="15" height="15" fill="#606468" stroke="#4a90e0" stroke-width="1.2"/><path d="M3 3 h3 v2 h-3z M5 6 h3 v2 h-3z M5 9 h3 v2 h-3z M7 12 h3 v2h-3z" fill="#f0c020"/><path d="M7 4 h6 M9 7 h4 M9 10 h4 M11 13 h2" stroke="#222" stroke-width="1"/></svg>
<div style="left:1276px;top:276px;width:32px;height:1px;background:#1e2124;"></div>
<div style="left:1276px;top:277px;width:32px;height:1px;background:#4a4f56;"></div>
<div style="left:1277px;top:280px;width:29px;height:1px;background:#4a4f56;"></div>
<div style="left:1277px;top:281px;width:30px;height:1px;background:#1e2124;"></div>
<div style="left:1277px;top:283px;width:29px;height:1px;background:#4a4f56;"></div>
<div style="left:1277px;top:284px;width:30px;height:1px;background:#1e2124;"></div>
<svg style="left:1284px;top:303px;" width="16" height="16" viewBox="0 0 16 16"><rect x="1" y="0.5" width="10" height="7" fill="#ffff00" stroke="#10a010" stroke-width="1"/><rect x="3" y="2.5" width="2.5" height="2.5" fill="none" stroke="#10a010" stroke-width="0.8"/><circle cx="12" cy="6" r="3.6" fill="#ffff00" stroke="#10a010" stroke-width="0.6"/><text x="1" y="16" font-family="Liberation Sans" font-weight="bold" font-size="8.5" fill="#b00000">ED</text></svg>
<svg style="left:1284px;top:336px;" width="16" height="16" viewBox="0 0 16 16"><rect x="1" y="0.5" width="4" height="4" fill="#2060ff"/><rect x="10" y="1" width="4" height="4" fill="#2060ff"/><path d="M4 3 L11 3 M12 4 L4 10" stroke="#10a010" stroke-width="1"/><text x="1" y="14" font-family="Liberation Sans" font-weight="bold" font-size="8.5" fill="#b00000">ED</text><rect x="12" y="11.5" width="4" height="4" fill="#2060ff"/></svg>
<svg style="left:1284px;top:368px;" width="18" height="18" viewBox="0 0 18 18"><circle cx="3.6" cy="4.5" r="3.1" fill="none" stroke="#10a010" stroke-width="1"/><path d="M8 2.2 Q11.5 1.5 12 5" fill="none" stroke="#1a9af0" stroke-width="1.2"/><path d="M10.5 4.5 L12.3 6.5 L13.8 4.2Z" fill="#1a9af0"/><circle cx="10" cy="10.6" r="3.2" fill="none" stroke="#10a010" stroke-width="1"/><circle cx="12.6" cy="13.4" r="3.2" fill="none" stroke="#10a010" stroke-width="1"/></svg>
<svg style="left:1284px;top:401px;" width="16" height="16" viewBox="0 0 16 16"><path d="M8 0.5 L10.5 3.5 H9 V7 H12.5 V5.5 L15.5 8 L12.5 10.5 V9 H9 V12.5 H10.5 L8 15.5 L5.5 12.5 H7 V9 H3.5 V10.5 L0.5 8 L3.5 5.5 V7 H7 V3.5 H5.5Z" fill="#2a9af0"/></svg>
<svg style="left:1284px;top:435px;" width="16" height="16" viewBox="0 0 16 16"><path d="M11.3 4.6 A4.6 4.6 0 1 0 11.9 10" fill="none" stroke="#1a9af0" stroke-width="2.2"/><path d="M8.5 2.5 L13.8 1.8 L12.8 7Z" fill="#1a9af0"/></svg>
<svg style="left:1284px;top:468px;" width="16" height="16" viewBox="0 0 16 16"><rect x="0.5" y="0.5" width="15" height="15" fill="none" stroke="#10a010" stroke-width="1"/><path d="M0.5 8.5 H7.5 V15.5" fill="none" stroke="#10a010" stroke-width="1"/><path d="M3 13 L13 3" stroke="#2a9af0" stroke-width="1.5"/><path d="M9 2.5 H13.5 V7" fill="none" stroke="#2a9af0" stroke-width="1.5"/></svg>
<svg style="left:1284px;top:500px;" width="16" height="16" viewBox="0 0 16 16"><path d="M7 1 L1.5 15.5 H7Z M9 1 L14.5 15.5 H9Z" fill="none" stroke="#10a010" stroke-width="1"/><path d="M8 0 V16" stroke="#d01010" stroke-width="1.5"/></svg>
<div style="left:1276px;top:531px;width:32px;height:1px;background:#1e2124;"></div>
<div style="left:1276px;top:532px;width:32px;height:1px;background:#4a4f56;"></div>
<div style="left:1277px;top:535px;width:29px;height:1px;background:#4a4f56;"></div>
<div style="left:1277px;top:536px;width:30px;height:1px;background:#1e2124;"></div>
<div style="left:1277px;top:538px;width:29px;height:1px;background:#4a4f56;"></div>
<div style="left:1277px;top:539px;width:30px;height:1px;background:#1e2124;"></div>
<svg style="left:1284px;top:558px;" width="16" height="16" viewBox="0 0 16 16"><path d="M3 13 L13 3" stroke="#10a010" stroke-width="1"/><rect x="0.5" y="10.5" width="4" height="4" fill="#1a6af8" stroke="#0030b0" stroke-width="0.5"/><rect x="10.5" y="0.5" width="4" height="4" fill="#1a6af8" stroke="#0030b0" stroke-width="0.5"/></svg>
<svg style="left:1284px;top:591px;" width="16" height="16" viewBox="0 0 16 16"><path d="M3 2.5 L12 3.5 L3 11.5 L12 12.5" fill="none" stroke="#10a010" stroke-width="1"/><rect x="0.5" y="0.5" width="4" height="4" fill="#1a6af8"/><rect x="10" y="1.5" width="4" height="4" fill="#1a6af8"/><rect x="1" y="9.5" width="4" height="4" fill="#1a6af8"/><rect x="11" y="11" width="4" height="4" fill="#1a6af8"/></svg>
<svg style="left:1284px;top:624px;" width="16" height="16" viewBox="0 0 16 16"><circle cx="7.5" cy="8.5" r="6.8" fill="none" stroke="#10a010" stroke-width="1"/><rect x="5.5" y="6.5" width="3.5" height="3.5" fill="#1a6af8"/><rect x="11" y="1" width="3.5" height="3.5" fill="#1a6af8"/></svg>
<svg style="left:1284px;top:657px;" width="16" height="16" viewBox="0 0 16 16"><rect x="2.5" y="2.5" width="11" height="11" fill="none" stroke="#10a010" stroke-width="1"/><rect x="0.5" y="11" width="4" height="4" fill="#1a6af8"/><rect x="11.5" y="0.5" width="4" height="4" fill="#1a6af8"/></svg>
<svg style="left:1284px;top:690px;" width="16" height="16" viewBox="0 0 16 16"><rect x="1" y="0.5" width="14" height="13" fill="#f0f0f0"/><rect x="0.5" y="4.5" width="11" height="5" fill="#ffff00" stroke="#10a010" stroke-width="1"/><rect x="3" y="6" width="2" height="2" fill="none" stroke="#10a010" stroke-width="0.7"/><circle cx="11.5" cy="10.5" r="3.8" fill="#ffff00" stroke="#10a010" stroke-width="0.6"/></svg>
<svg style="left:1284px;top:723px;" width="16" height="16" viewBox="0 0 16 16"><text x="8" y="14.5" font-family="Liberation Sans" font-style="italic" font-size="17" fill="#10a010" text-anchor="middle">A</text></svg>
<div style="left:12px;top:752px;width:1px;height:34px;background:#474c53;"></div>
<div style="left:13px;top:752px;width:1px;height:34px;background:#25282c;"></div>
<div style="left:15px;top:752px;width:1px;height:34px;background:#474c53;"></div>
<div style="left:16px;top:752px;width:1px;height:34px;background:#25282c;"></div>
<svg style="left:33px;top:761px;" width="17" height="17" viewBox="0 0 17 17"><rect x="0.5" y="0.5" width="15.5" height="15.5" rx="2.5" fill="#5a9ad8" stroke="#d8e8f8" stroke-width="0.8"/><path d="M1.5 6 Q1.5 2 8.3 2 Q15 2 15 6 L14.5 10 Q14 14.5 8.3 14.5 Q2.5 14.5 2 10Z" fill="#e00000"/><ellipse cx="8.3" cy="5.2" rx="6" ry="3" fill="#7aa0c8"/><path d="M3 6 Q8.3 11 13.5 6 L13 9.5 Q8.3 12 3.5 9.5Z" fill="#4070b0"/><ellipse cx="8.3" cy="4.3" rx="4.5" ry="1.6" fill="#c8d8e8"/></svg>
<svg style="left:59px;top:761px;" width="18" height="16" viewBox="0 0 18 16"><path d="M0.5 4 H17" stroke="#7a9ad0" stroke-width="1.4"/><path d="M7.5 5 V15 M10.5 5 V15" stroke="#e8e8e8" stroke-width="1.1"/><circle cx="9" cy="3.7" r="2" fill="#d02010"/></svg>
<svg style="left:86px;top:760px;" width="17" height="17" viewBox="0 0 17 17"><rect x="7" y="1" width="9" height="12" rx="2" fill="none" stroke="#d8d4c8" stroke-width="1.1"/><rect x="9.2" y="3.3" width="4.6" height="3" fill="none" stroke="#d8d4c8" stroke-width="1"/><rect x="9.2" y="7.8" width="4.6" height="3" fill="none" stroke="#d8d4c8" stroke-width="1"/><path d="M7 11.5 L3 14 M1 12.5 L3.5 16 M0.8 15 L4 13" stroke="#d8d4c8" stroke-width="1"/></svg>
<div style="left:113.50px;top:762px;font-size:17px;line-height:17px;color:#eff0f1;white-space:pre;"><span id="t67" style="display:inline-block;transform:scaleX(0.6778);transform-origin:0 0;will-change:transform">c+c</span></div>
<div style="left:140.50px;top:762px;font-size:17px;line-height:17px;color:#eff0f1;white-space:pre;"><span id="t68" style="display:inline-block;transform:scaleX(0.7333);transform-origin:0 0;will-change:transform">csel</span></div>
<div style="left:170.56px;top:762px;font-size:17px;line-height:17px;color:#eff0f1;white-space:pre;"><span id="t69" style="display:inline-block;transform:scaleX(0.8381);transform-origin:0 0;will-change:transform">inv</span></div>
<div style="left:197.62px;top:762px;font-size:17px;line-height:17px;color:#eff0f1;white-space:pre;"><span id="t70" style="display:inline-block;transform:scaleX(0.7760);transform-origin:0 0;will-change:transform">КЖ</span></div>
<div style="left:225.88px;top:762px;font-size:17px;line-height:17px;color:#eff0f1;white-space:pre;"><span id="t71" style="display:inline-block;transform:scaleX(0.8250);transform-origin:0 0;will-change:transform">ВМ</span></div>
<div style="left:284.70px;top:762px;font-size:17px;line-height:17px;color:#eff0f1;white-space:pre;"><span id="t72" style="display:inline-block;transform:scaleX(0.6700);transform-origin:0 0;will-change:transform">++</span></div>
<div style="left:308.54px;top:762px;font-size:17px;line-height:17px;color:#eff0f1;white-space:pre;"><span id="t73" style="display:inline-block;transform:scaleX(0.8591);transform-origin:0 0;will-change:transform">D()</span></div>
<div style="left:337.20px;top:762px;font-size:17px;line-height:17px;color:#eff0f1;white-space:pre;"><span id="t74" style="display:inline-block;transform:scaleX(0.6875);transform-origin:0 0;will-change:transform">ASL</span></div>
<svg style="left:257px;top:761px;" width="14" height="16" viewBox="0 0 14 16"><rect x="7.5" y="0.5" width="6" height="6" fill="none" stroke="#e01010" stroke-width="1.5"/><rect x="9.7" y="2.7" width="1.6" height="1.6" fill="#e01010"/><rect x="0.8" y="8.5" width="6" height="6" fill="none" stroke="#e01010" stroke-width="1.5"/><rect x="3" y="10.7" width="1.6" height="1.6" fill="#e01010"/></svg>
<svg style="left:369px;top:761px;" width="17" height="16" viewBox="0 0 17 16"><rect x="0" y="0" width="16" height="16" fill="#fcfcfc"/><path d="M1.2 6 V1.5 L3 4.5 L4.8 1.5 V6" fill="none" stroke="#1050a0" stroke-width="1"/><path d="M15 1.5 L7.5 9.5" stroke="#111" stroke-width="1.4"/><path d="M1.5 11 Q2.5 7.5 6.5 8 Q9 9 7 12 Q5 15 3 14.5 Q1 13.5 1.5 11Z" fill="#151515"/><path d="M3 10.5 Q4.5 9 6 10" stroke="#ddd" stroke-width="0.7" fill="none"/><path d="M12 11 V15.5 M9.8 12 L14.2 14.5 M14.2 12 L9.8 14.5" stroke="#1050a0" stroke-width="1"/></svg>
<svg style="left:396px;top:761px;" width="17" height="16" viewBox="0 0 17 16"><rect x="0" y="0" width="16" height="16" fill="#fcfcfc"/><path d="M1.2 6 Q1.5 1 3 2 Q4.5 4 5 1.5 L5.5 6" fill="none" stroke="#555" stroke-width="0.9"/><path d="M15 1.5 L7.5 9.5" stroke="#111" stroke-width="1.4"/><path d="M1.5 11 Q2.5 7.5 6.5 8 Q9 9 7 12 Q5 15 3 14.5 Q1 13.5 1.5 11Z" fill="#151515"/><path d="M3 10.5 Q4.5 9 6 10" stroke="#ddd" stroke-width="0.7" fill="none"/><circle cx="13" cy="13" r="2.6" fill="none" stroke="#1050a0" stroke-width="1.5" stroke-dasharray="1.6 1"/></svg>
<svg style="left:424px;top:761px;" width="16" height="16" viewBox="0 0 16 16"><rect x="0" y="0" width="15.5" height="15.5" rx="1" fill="#111"/><rect x="1.5" y="1.5" width="5.5" height="5.5" fill="#dde8f4"/><rect x="8.5" y="1.5" width="5.5" height="5.5" fill="#dde8f4"/><rect x="1.5" y="8.5" width="5.5" height="5.5" fill="#dde8f4"/><rect x="8.5" y="8.5" width="5.5" height="5.5" fill="#dde8f4"/></svg>
<svg style="left:449px;top:761px;" width="18" height="17" viewBox="0 0 18 17"><rect x="2.5" y="1.5" width="9" height="6" fill="#e8e080" stroke="#2060c0" stroke-width="1"/><circle cx="1.8" cy="8" r="1.5" fill="#1a7af0"/><path d="M15.5 3 Q16.5 7 13 8" fill="none" stroke="#2060c0" stroke-width="1"/><path d="M13.5 0.5 L13.5 5 L11 3Z" fill="#2060c0"/><circle cx="10" cy="12" r="4" fill="#e8e080" stroke="#203060" stroke-width="0.8" stroke-dasharray="1 0.8"/></svg>
<div style="left:10px;top:789px;width:1298px;height:1px;background:#222528;"></div>
<div style="left:10px;top:790px;width:1298px;height:1px;background:#474c53;"></div>
<div style="left:128.21px;top:800px;font-size:17px;line-height:17px;color:#eff0f1;white-space:pre;"><span id="t75" style="display:inline-block;transform:scaleX(0.7856);transform-origin:0 0;will-change:transform">113.1186, 317.4319, 0.0000</span></div>
<div style="left:413px;top:792px;width:1px;height:32px;background:#555a5f;"></div>
<svg style="left:420px;top:798px;" width="20" height="20" viewBox="0 0 20 20"><rect x="2.5" y="2.00" width="1.2" height="1.2" fill="#111"/><rect x="1.5" y="1.00" width="1.3" height="1.3" fill="#c8c8c0"/><rect x="7.5" y="2.00" width="1.2" height="1.2" fill="#111"/><rect x="6.5" y="1.00" width="1.3" height="1.3" fill="#c8c8c0"/><rect x="12.5" y="2.00" width="1.2" height="1.2" fill="#111"/><rect x="11.5" y="1.00" width="1.3" height="1.3" fill="#c8c8c0"/><rect x="17.5" y="2.00" width="1.2" height="1.2" fill="#111"/><rect x="16.5" y="1.00" width="1.3" height="1.3" fill="#c8c8c0"/><rect x="5.0" y="4.35" width="1.2" height="1.2" fill="#111"/><rect x="4.0" y="3.35" width="1.3" height="1.3" fill="#c8c8c0"/><rect x="10.0" y="4.35" width="1.2" height="1.2" fill="#111"/><rect x="9.0" y="3.35" width="1.3" height="1.3" fill="#c8c8c0"/><rect x="15.0" y="4.35" width="1.2" height="1.2" fill="#111"/><rect x="14.0" y="3.35" width="1.3" height="1.3" fill="#c8c8c0"/><rect x="2.5" y="6.70" width="1.2" height="1.2" fill="#111"/><rect x="1.5" y="5.70" width="1.3" height="1.3" fill="#c8c8c0"/><rect x="7.5" y="6.70" width="1.2" height="1.2" fill="#111"/><rect x="6.5" y="5.70" width="1.3" height="1.3" fill="#c8c8c0"/><rect x="12.5" y="6.70" width="1.2" height="1.2" fill="#111"/><rect x="11.5" y="5.70" width="1.3" height="1.3" fill="#c8c8c0"/><rect x="17.5" y="6.70" width="1.2" height="1.2" fill="#111"/><rect x="16.5" y="5.70" width="1.3" height="1.3" fill="#c8c8c0"/><rect x="5.0" y="9.05" width="1.2" height="1.2" fill="#111"/><rect x="4.0" y="8.05" width="1.3" height="1.3" fill="#c8c8c0"/><rect x="10.0" y="9.05" width="1.2" height="1.2" fill="#111"/><rect x="9.0" y="8.05" width="1.3" height="1.3" fill="#c8c8c0"/><rect x="15.0" y="9.05" width="1.2" height="1.2" fill="#111"/><rect x="14.0" y="8.05" width="1.3" height="1.3" fill="#c8c8c0"/><rect x="2.5" y="11.40" width="1.2" height="1.2" fill="#111"/><rect x="1.5" y="10.40" width="1.3" height="1.3" fill="#c8c8c0"/><rect x="7.5" y="11.40" width="1.2" height="1.2" fill="#111"/><rect x="6.5" y="10.40" width="1.3" height="1.3" fill="#c8c8c0"/><rect x="12.5" y="11.40" width="1.2" height="1.2" fill="#111"/><rect x="11.5" y="10.40" width="1.3" height="1.3" fill="#c8c8c0"/><rect x="17.5" y="11.40" width="1.2" height="1.2" fill="#111"/><rect x="16.5" y="10.40" width="1.3" height="1.3" fill="#c8c8c0"/><rect x="5.0" y="13.75" width="1.2" height="1.2" fill="#111"/><rect x="4.0" y="12.75" width="1.3" height="1.3" fill="#c8c8c0"/><rect x="10.0" y="13.75" width="1.2" height="1.2" fill="#111"/><rect x="9.0" y="12.75" width="1.3" height="1.3" fill="#c8c8c0"/><rect x="15.0" y="13.75" width="1.2" height="1.2" fill="#111"/><rect x="14.0" y="12.75" width="1.3" height="1.3" fill="#c8c8c0"/><rect x="2.5" y="16.10" width="1.2" height="1.2" fill="#111"/><rect x="1.5" y="15.10" width="1.3" height="1.3" fill="#c8c8c0"/><rect x="7.5" y="16.10" width="1.2" height="1.2" fill="#111"/><rect x="6.5" y="15.10" width="1.3" height="1.3" fill="#c8c8c0"/><rect x="12.5" y="16.10" width="1.2" height="1.2" fill="#111"/><rect x="11.5" y="15.10" width="1.3" height="1.3" fill="#c8c8c0"/><rect x="17.5" y="16.10" width="1.2" height="1.2" fill="#111"/><rect x="16.5" y="15.10" width="1.3" height="1.3" fill="#c8c8c0"/><path d="M7 1 V17 M1 10.5 H18" stroke="#111" stroke-width="1.4"/><path d="M7.6 1 V16.5 M1 10 H17.5" stroke="#d8d8d0" stroke-width="0.9"/></svg>
<svg style="left:447px;top:798px;" width="20" height="20" viewBox="0 0 20 20"><rect x="2.5" y="2.00" width="1.2" height="1.2" fill="#111"/><rect x="1.5" y="1.00" width="1.3" height="1.3" fill="#c8c8c0"/><rect x="7.5" y="2.00" width="1.2" height="1.2" fill="#111"/><rect x="6.5" y="1.00" width="1.3" height="1.3" fill="#c8c8c0"/><rect x="12.5" y="2.00" width="1.2" height="1.2" fill="#111"/><rect x="11.5" y="1.00" width="1.3" height="1.3" fill="#c8c8c0"/><rect x="17.5" y="2.00" width="1.2" height="1.2" fill="#111"/><rect x="16.5" y="1.00" width="1.3" height="1.3" fill="#c8c8c0"/><rect x="5.0" y="4.35" width="1.2" height="1.2" fill="#111"/><rect x="4.0" y="3.35" width="1.3" height="1.3" fill="#c8c8c0"/><rect x="10.0" y="4.35" width="1.2" height="1.2" fill="#111"/><rect x="9.0" y="3.35" width="1.3" height="1.3" fill="#c8c8c0"/><rect x="15.0" y="4.35" width="1.2" height="1.2" fill="#111"/><rect x="14.0" y="3.35" width="1.3" height="1.3" fill="#c8c8c0"/><rect x="2.5" y="6.70" width="1.2" height="1.2" fill="#111"/><rect x="1.5" y="5.70" width="1.3" height="1.3" fill="#c8c8c0"/><rect x="7.5" y="6.70" width="1.2" height="1.2" fill="#111"/><rect x="6.5" y="5.70" width="1.3" height="1.3" fill="#c8c8c0"/><rect x="12.5" y="6.70" width="1.2" height="1.2" fill="#111"/><rect x="11.5" y="5.70" width="1.3" height="1.3" fill="#c8c8c0"/><rect x="17.5" y="6.70" width="1.2" height="1.2" fill="#111"/><rect x="16.5" y="5.70" width="1.3" height="1.3" fill="#c8c8c0"/><rect x="5.0" y="9.05" width="1.2" height="1.2" fill="#111"/><rect x="4.0" y="8.05" width="1.3" height="1.3" fill="#c8c8c0"/><rect x="10.0" y="9.05" width="1.2" height="1.2" fill="#111"/><rect x="9.0" y="8.05" width="1.3" height="1.3" fill="#c8c8c0"/><rect x="15.0" y="9.05" width="1.2" height="1.2" fill="#111"/><rect x="14.0" y="8.05" width="1.3" height="1.3" fill="#c8c8c0"/><rect x="2.5" y="11.40" width="1.2" height="1.2" fill="#111"/><rect x="1.5" y="10.40" width="1.3" height="1.3" fill="#c8c8c0"/><rect x="7.5" y="11.40" width="1.2" height="1.2" fill="#111"/><rect x="6.5" y="10.40" width="1.3" height="1.3" fill="#c8c8c0"/><rect x="12.5" y="11.40" width="1.2" height="1.2" fill="#111"/><rect x="11.5" y="10.40" width="1.3" height="1.3" fill="#c8c8c0"/><rect x="17.5" y="11.40" width="1.2" height="1.2" fill="#111"/><rect x="16.5" y="10.40" width="1.3" height="1.3" fill="#c8c8c0"/><rect x="5.0" y="13.75" width="1.2" height="1.2" fill="#111"/><rect x="4.0" y="12.75" width="1.3" height="1.3" fill="#c8c8c0"/><rect x="10.0" y="13.75" width="1.2" height="1.2" fill="#111"/><rect x="9.0" y="12.75" width="1.3" height="1.3" fill="#c8c8c0"/><rect x="15.0" y="13.75" width="1.2" height="1.2" fill="#111"/><rect x="14.0" y="12.75" width="1.3" height="1.3" fill="#c8c8c0"/><rect x="2.5" y="16.10" width="1.2" height="1.2" fill="#111"/><rect x="1.5" y="15.10" width="1.3" height="1.3" fill="#c8c8c0"/><rect x="7.5" y="16.10" width="1.2" height="1.2" fill="#111"/><rect x="6.5" y="15.10" width="1.3" height="1.3" fill="#c8c8c0"/><rect x="12.5" y="16.10" width="1.2" height="1.2" fill="#111"/><rect x="11.5" y="15.10" width="1.3" height="1.3" fill="#c8c8c0"/><rect x="17.5" y="16.10" width="1.2" height="1.2" fill="#111"/><rect x="16.5" y="15.10" width="1.3" height="1.3" fill="#c8c8c0"/></svg>
<svg style="left:474px;top:797px;" width="18" height="19" viewBox="0 0 18 19"><path d="M0 16.5 H17" stroke="#c8c8a0" stroke-width="1"/><path d="M6 16 L14 6" stroke="#222" stroke-width="1"/><rect x="5" y="14" width="3" height="3" fill="#2070e0"/><rect x="12" y="6" width="3" height="3" fill="#2070e0"/><text x="14" y="6" font-family="Liberation Sans" font-weight="bold" font-size="7" fill="#e01010">2</text><text x="2" y="14" font-family="Liberation Sans" font-weight="bold" font-size="7" fill="#e01010">2</text></svg>
<div style="left:502.50px;top:800px;font-size:17px;line-height:17px;color:#eff0f1;white-space:pre;"><span id="t76" style="display:inline-block;transform:scaleX(0.6955);transform-origin:0 0;will-change:transform">+G</span></div>
<svg style="left:529px;top:799px;" width="16" height="16" viewBox="0 0 16 16"><path d="M2 13 L13 2" stroke="#7a8a9a" stroke-width="4"/><path d="M2 13 L13 2" stroke="#333" stroke-width="2.4" stroke-dasharray="1 1"/><rect x="0.5" y="11.5" width="3" height="3" fill="#2070e0"/><rect x="12" y="0.5" width="3" height="3" fill="#2070e0"/></svg>
<div style="left:553px;top:793px;width:23px;height:29px;border:1px solid #63676c;border-radius:3px;background:#54585d"></div>
<svg style="left:555px;top:798px;" width="22" height="20" viewBox="0 0 22 20"><path d="M11 17 L19 6" stroke="#111" stroke-width="1.2" stroke-dasharray="1.2 1"/><path d="M6.5 5 V14 H13" fill="none" stroke="#ffff00" stroke-width="1.2"/><rect x="13" y="2" width="5" height="5" fill="#1a7af0" stroke="#ffff00" stroke-width="1.2"/><rect x="1.5" y="12" width="5" height="5" fill="#1a7af0" stroke="#ffff00" stroke-width="1.2"/><rect x="11.5" y="12.5" width="2.5" height="2.5" fill="#1a7af0"/><rect x="7.5" y="9" width="2.5" height="2.5" fill="#1a7af0"/></svg>
<div style="left:580px;top:793px;width:23px;height:29px;border:1px solid #63676c;border-radius:3px;background:#54585d"></div>
<svg style="left:582px;top:798px;" width="22" height="20" viewBox="0 0 22 20"><path d="M4 16 L15 4 M12 8 L15 12" stroke="#111" stroke-width="1.2" stroke-dasharray="1.2 1"/><rect x="2.5" y="14.5" width="3" height="3" fill="#1a7af0"/><rect x="13.5" y="2" width="3" height="3" fill="#1a7af0"/><rect x="9" y="7.5" width="3" height="3" fill="#1a7af0"/><rect x="13" y="11" width="3" height="3" fill="#1a7af0"/></svg>
<div style="left:607px;top:793px;width:23px;height:29px;border:1px solid #63676c;border-radius:3px;background:#54585d"></div>
<div style="left:610.00px;top:800px;font-size:17px;line-height:17px;color:#eff0f1;white-space:pre;"><span id="t77" style="display:inline-block;transform:scaleX(0.6958);transform-origin:0 0;will-change:transform">AG</span></div>
<div style="left:636.86px;top:800px;font-size:17px;line-height:17px;color:#eff0f1;white-space:pre;"><span id="t78" style="display:inline-block;transform:scaleX(0.6435);transform-origin:0 0;will-change:transform">SG</span></div>
<div style="left:1110px;top:792px;width:196px;height:29px;border:1px solid #686c70;border-radius:3px;background:#31363b"></div>
<div style="left:1116.40px;top:800px;font-size:17px;line-height:17px;color:#eff0f1;white-space:pre;"><span id="t79" style="display:inline-block;transform:scaleX(0.8701);transform-origin:0 0;will-change:transform">defaultlayout</span></div>
<svg style="left:1291.5px;top:803.5px;" width="11" height="7" viewBox="0 0 11 7"><path d="M1 1 L5.5 6.0 L10.0 1" fill="none" stroke="#eff0f1" stroke-width="1.2" opacity="1"/></svg>
</body></html>
